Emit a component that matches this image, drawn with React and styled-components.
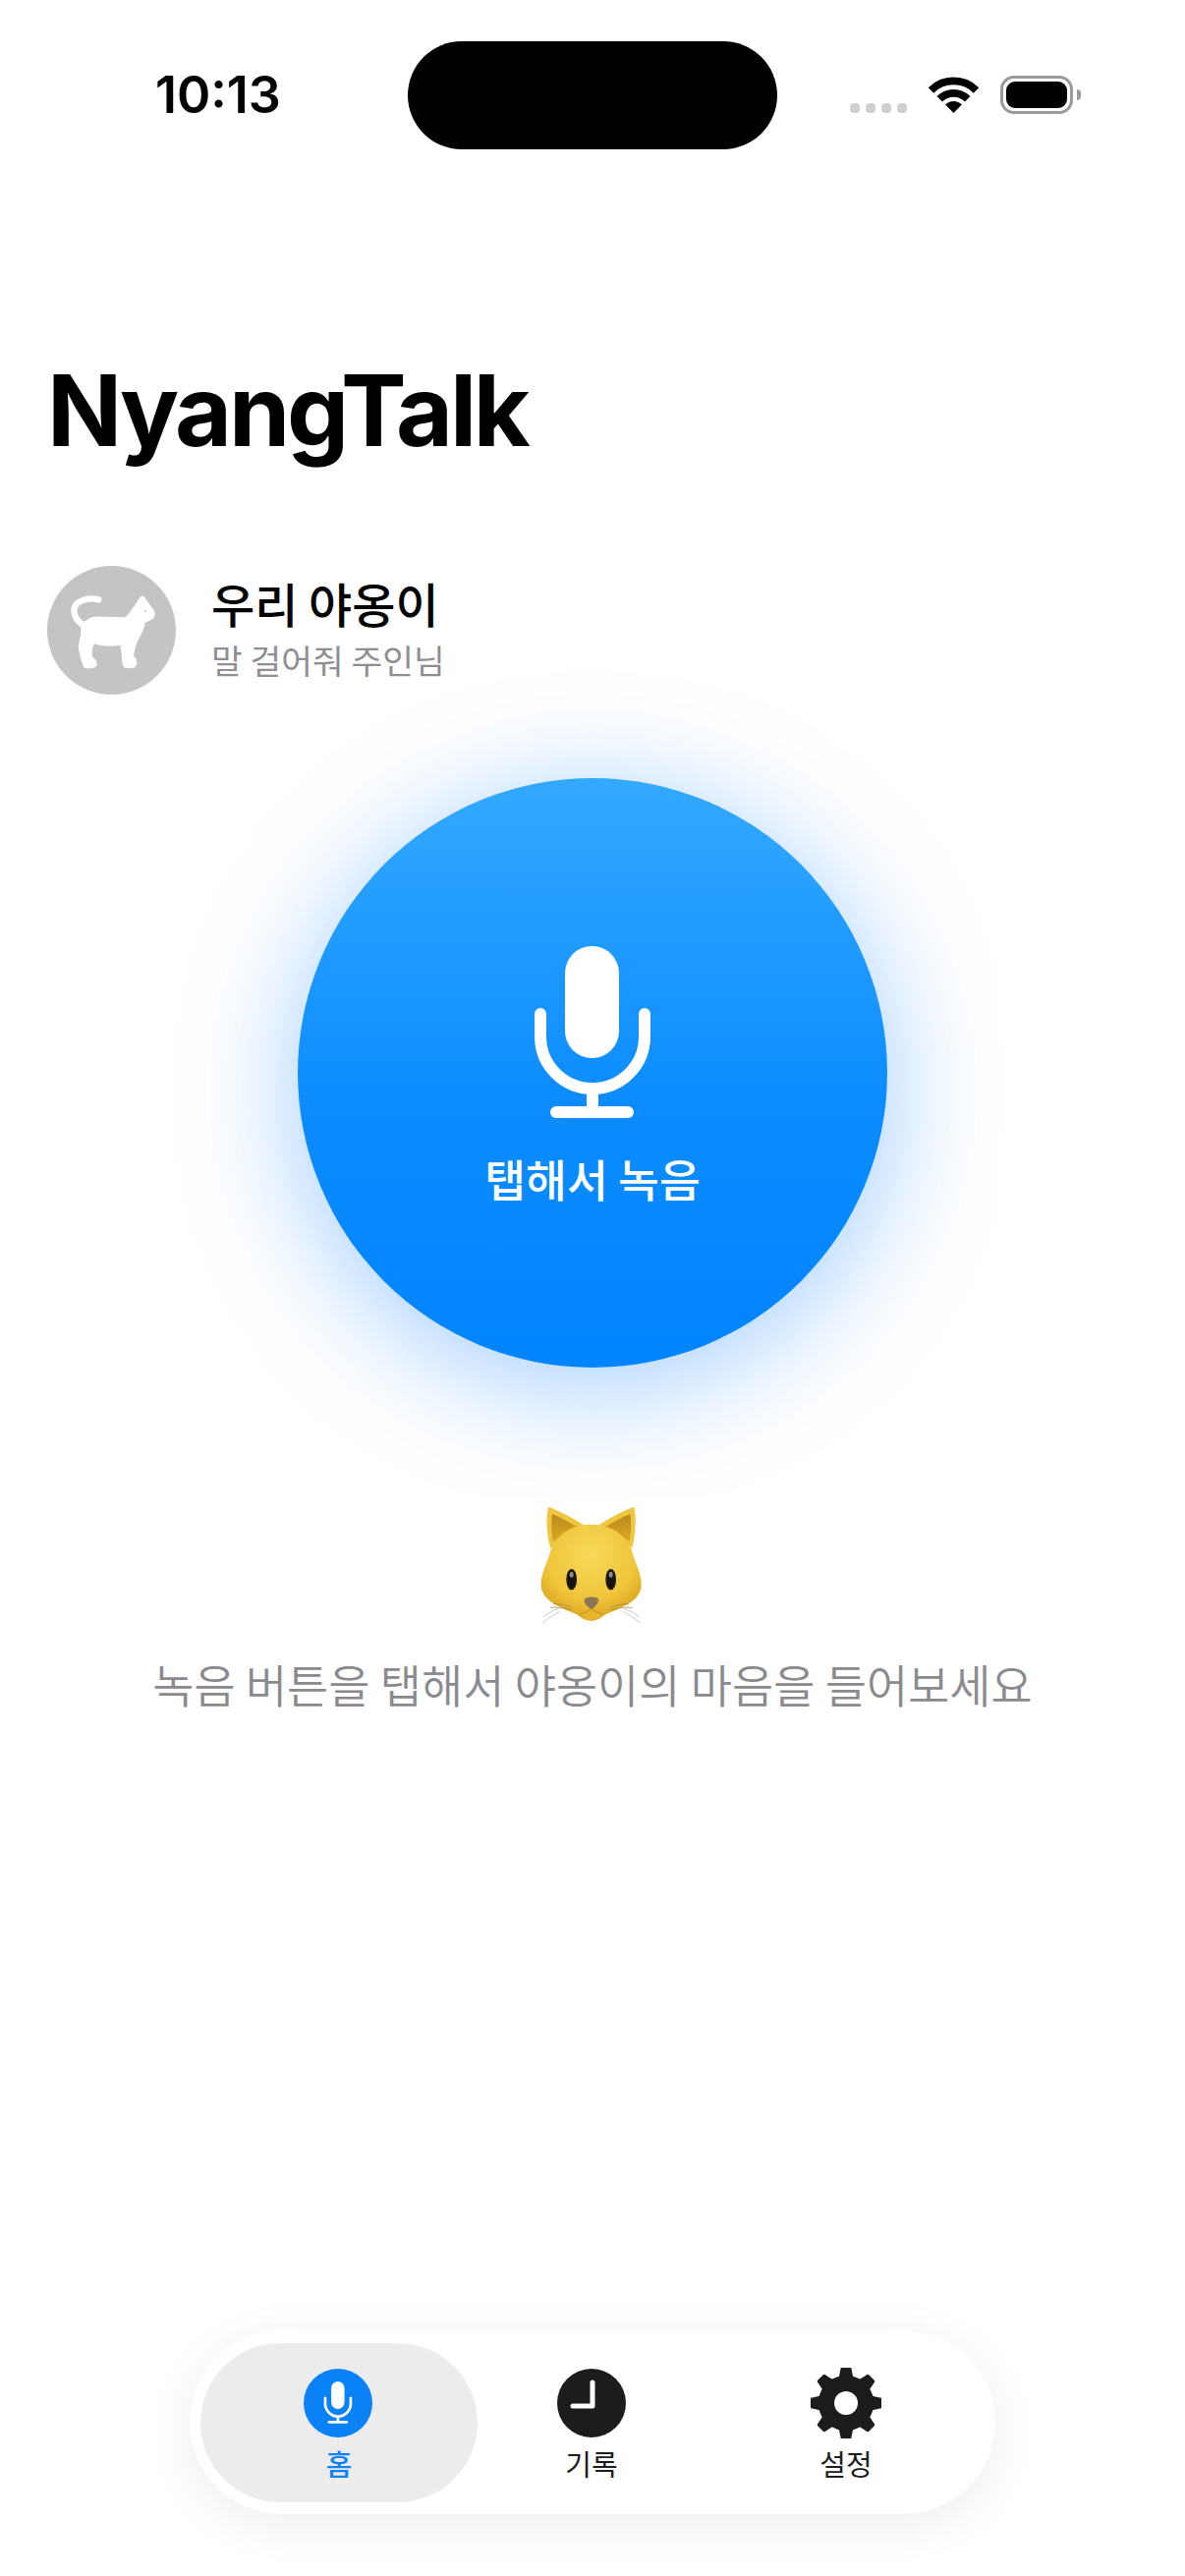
import React from "react";
import styled, { createGlobalStyle } from "styled-components";

const Global = createGlobalStyle`
  html, body { margin: 0; padding: 0; background: #fff; }
  body { font-family: Inter, "Noto Sans CJK KR", sans-serif; }
`;
const KR = `"Noto Sans CJK KR", Inter, sans-serif`;

const Page = styled.div`
  width: 1206px; height: 2622px; box-sizing: border-box; overflow: hidden;
  display: flex; flex-direction: column; background: #fff;
`;
const StatusBar = styled.header`
  display: grid; grid-template-columns: 415px 376px 1fr; height: 110px;
  margin-top: 42px; align-items: center;
`;
const Clock = styled.div`
  padding-left: 158px; font-size: 52px; font-weight: 600; color: #000; letter-spacing: 0;
  margin-top: -1px;
`;
const Island = styled.div`height: 110px; background: #000; border-radius: 55px;`;
const Indicators = styled.div`
  display: flex; align-items: flex-start; padding-left: 74px; height: 39px; margin-top: -1px;
`;
const SignalDots = styled.div`display: flex; gap: 6px; margin-top: 28px;`;
const Dot = styled.span`width: 10px; height: 10px; border-radius: 4px; background: #cfcfcf;`;
const WifiIcon = styled.svg`width: 51px; height: 37px; margin-left: 22px; margin-top: 1px;`;
const Battery = styled.div`
  width: 74px; height: 39px; margin-left: 22px; box-sizing: border-box; padding: 3px;
  border: 3px solid #9a9a9a; border-radius: 14px; position: relative;
  &::after { content: ""; position: absolute; right: -11px; top: 11px; width: 4px; height: 11px;
    background: #9a9a9a; border-radius: 0 4px 4px 0; }
`;
const BatteryFill = styled.div`height: 100%; background: #000; border-radius: 9px;`;

const Title = styled.h1`
  margin: 203px 0 0 48px; font-size: 100px; line-height: 126px; font-weight: 700;
  letter-spacing: -3.2px; color: #000;
`;
const Profile = styled.section`
  display: flex; align-items: center; gap: 36px; margin: 95px 0 0 48px; height: 131px;
`;
const Avatar = styled.svg`width: 131px; height: 131px; flex: none;`;
const ProfileText = styled.div`display: flex; flex-direction: column; font-family: ${KR}; margin-top: -8px;`;
const PetName = styled.div`font-size: 48px; line-height: 60px; font-weight: 500; color: #000;`;
const PetStatus = styled.div`font-size: 34.5px; line-height: 42px; font-weight: 400; color: #8e8e93; margin-top: 7px;`;

const RecordButton = styled.button`
  align-self: center; margin-top: 85px; width: 600px; height: 600px; border: 0; border-radius: 50%;
  padding: 0; display: flex; flex-direction: column; align-items: center; flex: none;
  background: linear-gradient(180deg, #33a9ff 0%, #0c8cff 55%, #0084ff 100%);
  box-shadow: 0 18px 120px rgba(0, 122, 255, 0.38);
  font-family: ${KR}; color: #fff;
`;
const BigMic = styled.svg`width: 118px; height: 176px; margin-top: 171px; flex: none;`;
const RecordLabel = styled.span`font-size: 45.5px; line-height: 60px; font-weight: 500; margin-top: 30px;`;

const Hint = styled.section`
  display: flex; flex-direction: column; align-items: center; margin-top: 127px;
`;
const CatEmoji = styled.svg`width: 150px; height: 150px; flex: none; margin-left: 3px;`;
const HintText = styled.p`
  margin: 13px 0 0; font-family: ${KR}; font-size: 45.9px; line-height: 62px; font-weight: 350; color: #8a8a8e;
`;

const Nav = styled.nav`
  margin: auto 0 63px 193px; width: 820px; height: 187px; box-sizing: border-box;
  padding: 13px 0 12px 11px; background: #fff; border-radius: 94px;
  display: grid; grid-template-columns: 282px 232px 286px;
  box-shadow: 0 10px 50px rgba(0, 0, 0, 0.07);
`;
const Tab = styled.div`
  display: flex; flex-direction: column; align-items: center; border-radius: 81px; padding-top: 25px;
  font-family: ${KR}; font-size: 29px; line-height: 40px; font-weight: ${(p) => (p.$active ? 500 : 400)};
  color: ${(p) => (p.$active ? "#0a82f5" : "#1c1c1e")};
  background: ${(p) => (p.$active ? "#ececed" : "transparent")};
`;
const TabIcon = styled.svg`width: 72px; height: 72px; flex: none; margin-bottom: 5px;`;
const HomeIcon = styled(TabIcon)`margin-left: -2px;`;

function gearPath() {
  const cx = 36, cy = 36, teeth = 8;
  const pts = [];
  for (let i = 0; i < teeth; i++) {
    const a = (i * 2 * Math.PI) / teeth - Math.PI / 2;
    const step = (2 * Math.PI) / teeth;
    const add = (r, d) => {
      const t = a + d * step;
      pts.push(`${(cx + r * Math.cos(t)).toFixed(2)} ${(cy + r * Math.sin(t)).toFixed(2)}`);
    };
    add(27, -0.27); add(35.5, -0.14); add(35.5, 0.14); add(27, 0.27);
  }
  return `M${pts.join("L")}Z`;
}

const Mic = ({ stroke = "#fff", w = 12 }) => (
  <>
    <rect x="31" y="0" width="55" height="114" rx="27.5" fill={stroke} />
    <path d="M6 69 V 92 A 53 53 0 0 0 112 92 V 69" fill="none" stroke={stroke} strokeWidth={w} strokeLinecap="round" />
    <path d="M59 145 V 168" stroke={stroke} strokeWidth={w} />
    <path d="M22 169 H 95" stroke={stroke} strokeWidth={w} strokeLinecap="round" />
  </>
);

export default function App() {
  return (
    <Page>
      <Global />
      <StatusBar>
        <Clock>10:13</Clock>
        <Island />
        <Indicators>
          <SignalDots><Dot /><Dot /><Dot /><Dot /></SignalDots>
          <WifiIcon viewBox="0 0 152 110">
            <path d="M7.4 41.4 A 97 97 0 0 1 144.6 41.4" fill="none" stroke="#000" strokeWidth="23" />
            <path d="M33.6 67.6 A 60 60 0 0 1 118.4 67.6" fill="none" stroke="#000" strokeWidth="23" />
            <path d="M76 110 L51 85 A 35 35 0 0 1 101 85 Z" fill="#000" />
          </WifiIcon>
          <Battery><BatteryFill /></Battery>
        </Indicators>
      </StatusBar>

      <Title>NyangTalk</Title>

      <Profile>
        <Avatar viewBox="25 18 393 393">
          <circle cx="221.5" cy="214.5" r="196.5" fill="#c4c4c7" />
          <path d="M182 121 C 150 112 106 125 107 155 C 108 175 120 188 132 197" fill="none" stroke="#fff" strokeWidth="19" strokeLinecap="round" />
          <path d="M128 195 C 145 188 155 176 170 175 C 205 172 240 180 265 176 C 280 165 295 135 312 113 C 316 110 320 112 323 118 C 330 130 340 140 350 156 C 354 165 352 176 338 183 L 322 190 C 320 215 305 235 298 250 C 292 270 285 285 288 295 C 298 305 300 318 293 325 C 285 329 268 330 262 327 C 255 322 255 310 255 295 L 250 258 C 225 262 190 262 168 253 C 160 270 158 285 162 298 C 175 305 178 318 172 325 C 160 330 145 330 138 326 C 132 310 125 285 122 265 C 125 245 135 220 128 195 Z" fill="#fff" stroke="#fff" strokeWidth="4" strokeLinejoin="round" />
          <circle cx="325" cy="155" r="3" fill="#c4c4c7" />
        </Avatar>
        <ProfileText>
          <PetName>우리 야옹이</PetName>
          <PetStatus>말 걸어줘 주인님</PetStatus>
        </ProfileText>
      </Profile>

      <RecordButton>
        <BigMic viewBox="0 0 118 176"><Mic /></BigMic>
        <RecordLabel>탭해서 녹음</RecordLabel>
      </RecordButton>

      <Hint>
        <CatEmoji viewBox="0 0 450 450">
          <defs>
            <radialGradient id="face" cx="215" cy="190" r="210" gradientUnits="userSpaceOnUse">
              <stop offset="0" stopColor="#f8d95a" />
              <stop offset="0.65" stopColor="#f0c53a" />
              <stop offset="1" stopColor="#d9a21e" />
            </radialGradient>
            <linearGradient id="ear" x1="0" y1="0" x2="0" y2="1">
              <stop offset="0" stopColor="#b98a1a" />
              <stop offset="1" stopColor="#dca826" />
            </linearGradient>
          </defs>
          <path d="M84 44 C 120 58 160 78 192 100 L 90 170 C 80 130 76 85 84 44 Z" fill="#efc63f" />
          <path d="M346 44 C 310 58 270 78 238 100 L 340 170 C 350 130 354 85 346 44 Z" fill="#efc63f" />
          <path d="M96 66 C 120 76 150 92 176 108 L 98 150 C 93 120 92 95 96 66 Z" fill="url(#ear)" />
          <path d="M334 66 C 310 76 280 92 254 108 L 332 150 C 337 120 338 95 334 66 Z" fill="url(#ear)" />
          <path d="M215 98 C 160 98 112 125 92 175 C 82 215 60 250 62 285 C 65 330 115 350 170 372 C 190 388 202 392 215 392 C 228 392 240 388 260 372 C 315 350 365 330 368 285 C 370 250 348 215 338 175 C 318 125 270 98 215 98 Z" fill="url(#face)" />
          <path d="M180 372 C 195 358 205 358 215 362 C 225 358 235 358 250 372 C 235 388 225 392 215 392 C 205 392 195 388 180 372 Z" fill="#e9b52c" />
          <ellipse cx="155" cy="266" rx="16" ry="32" fill="#17140e" />
          <ellipse cx="275" cy="266" rx="16" ry="32" fill="#17140e" />
          <ellipse cx="155" cy="251" rx="6" ry="9" fill="#8d8d8d" />
          <ellipse cx="275" cy="251" rx="6" ry="9" fill="#8d8d8d" />
          <path d="M200 322 C 210 319 222 319 232 322 C 240 326 238 336 230 344 C 224 352 220 355 216 355 C 212 355 206 350 200 344 C 192 336 192 326 200 322 Z" fill="#8a7558" />
          <path d="M180 372 C 198 368 210 360 216 354 C 222 360 234 368 250 372" fill="none" stroke="#b98a1a" strokeWidth="3" />
          <g fill="none" stroke="#9a8540" strokeWidth="2.2" strokeLinecap="round">
            <path d="M156 352 C 135 342 118 342 100 340" />
            <path d="M156 360 C 135 352 115 350 90 352" />
            <path d="M274 352 C 295 342 312 342 330 340" />
            <path d="M274 360 C 295 352 315 350 340 352" />
          </g>
          <g fill="none" stroke="#b0aca4" strokeWidth="2" strokeLinecap="round">
            <path d="M115 355 C 98 360 84 368 70 380" />
            <path d="M118 365 C 100 372 84 384 68 398" />
            <path d="M315 355 C 332 360 346 368 362 380" />
            <path d="M312 365 C 330 372 346 384 364 398" />
          </g>
        </CatEmoji>
        <HintText>녹음 버튼을 탭해서 야옹이의 마음을 들어보세요</HintText>
      </Hint>

      <Nav>
        <Tab $active>
          <HomeIcon viewBox="0 0 72 72">
            <circle cx="36" cy="36" r="35" fill="#0a82f5" />
            <g transform="translate(21.5 14) scale(0.245)"><Mic w={11} /></g>
          </HomeIcon>
          홈
        </Tab>
        <Tab>
          <TabIcon viewBox="0 0 72 72">
            <circle cx="36" cy="36" r="35" fill="#1c1c1e" />
            <path d="M37 15 V 39 H 17" fill="none" stroke="#fff" strokeWidth="5" strokeLinecap="round" strokeLinejoin="round" />
          </TabIcon>
          기록
        </Tab>
        <Tab>
          <TabIcon viewBox="0 0 72 72">
            <path d={gearPath()} fill="#1c1c1e" stroke="#1c1c1e" strokeWidth="3" strokeLinejoin="round" />
            <circle cx="36" cy="36" r="12" fill="#fff" />
          </TabIcon>
          설정
        </Tab>
      </Nav>
    </Page>
  );
}
